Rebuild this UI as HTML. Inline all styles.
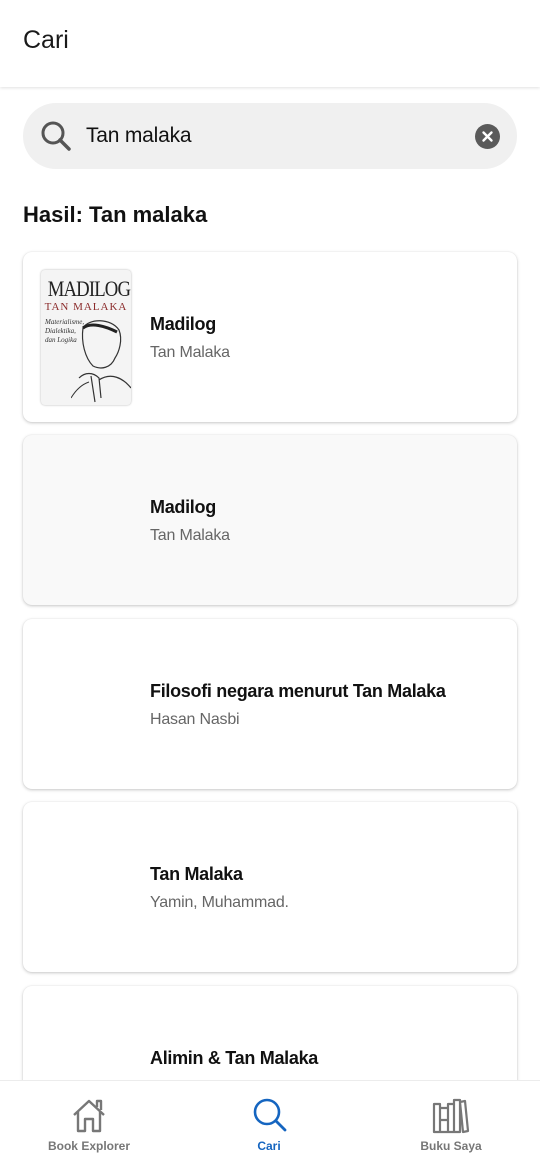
<!DOCTYPE html>
<html><head><meta charset="utf-8"><style>
*{margin:0;padding:0;box-sizing:border-box}
body{width:540px;height:1169px;overflow:hidden;background:#fff;font-family:"Liberation Sans",Roboto,sans-serif;position:relative;color:#111}
.hdr{position:absolute;top:0;left:0;width:540px;height:87px;background:#fff;box-shadow:0 1px 3px rgba(0,0,0,.12)}
.hdr h1{position:absolute;left:23px;top:26px;font-size:25px;font-weight:400;color:#1a1a1a}
.search{position:absolute;left:23px;top:103px;width:494px;height:66px;border-radius:33px;background:#f0f0f0}
.search .t{position:absolute;left:63px;top:21px;font-size:21px;color:#111;letter-spacing:-.2px}
.clr{position:absolute;left:452px;top:21px;width:25px;height:25px;border-radius:50%;background:#5a5a5a}
.res{position:absolute;left:23px;top:202px;font-size:22px;font-weight:700}
.card{position:absolute;left:23px;width:494px;height:170px;background:#fff;border-radius:9px;box-shadow:0 1px 3px rgba(0,0,0,.22),0 0 1px rgba(0,0,0,.1)}
.card .ti{position:absolute;left:127px;top:62px;font-size:18px;font-weight:700;color:#111;letter-spacing:-.3px}
.card .au{position:absolute;left:127px;top:92px;font-size:16px;color:#666;letter-spacing:-.2px}
.cover{position:absolute;left:18px;top:18px;width:90px;height:135px;background:#f4f4f4;border-radius:4px;overflow:hidden;box-shadow:0 0 2px rgba(0,0,0,.3)}
.nav{position:absolute;left:0;top:1080px;width:540px;height:89px;background:#fff;border-top:1px solid #ececec}
.nav .lb{position:absolute;top:58px;font-size:12px;font-weight:700;color:#777;transform:translateX(-50%);white-space:nowrap}
</style></head><body>
<div class="hdr"><h1>Cari</h1></div>
<div class="search">
<svg style="position:absolute;left:16px;top:16px" width="34" height="34" viewBox="0 0 34 34"><circle cx="14" cy="14" r="10" fill="none" stroke="#555" stroke-width="3"/><line x1="21" y1="21" x2="30" y2="30" stroke="#555" stroke-width="3.5" stroke-linecap="round"/></svg>
<span class="t">Tan malaka</span>
<div class="clr"><svg width="25" height="25" viewBox="0 0 25 25"><path d="M8.5 8.5L16.5 16.5M16.5 8.5L8.5 16.5" stroke="#fff" stroke-width="2.4" stroke-linecap="round"/></svg></div>
</div>
<div class="res">Hasil: Tan malaka</div>

<div class="card" style="top:252px">
<div class="cover">
<div style="position:absolute;left:0;width:90px;top:6px;text-align:center;font-family:'Liberation Serif',serif;font-size:22px;color:#222;letter-spacing:-1px;transform:scaleX(.85)">MADILOG</div>
<div style="position:absolute;left:0;width:90px;top:31px;text-align:center;font-family:'Liberation Serif',serif;font-size:11px;color:#8b2b2b;letter-spacing:1px">TAN MALAKA</div>
<div style="position:absolute;left:4px;top:48px;font-family:'Liberation Serif',serif;font-style:italic;font-size:7px;color:#333;line-height:9px">Materialisme,<br>Dialektika,<br>dan Logika</div>
<svg style="position:absolute;left:30px;top:48px" width="60" height="87" viewBox="0 0 60 87"><path d="M12 10C18 0 40 0 48 12C52 22 48 34 44 40C40 50 30 52 22 48C14 40 10 24 12 10Z" fill="none" stroke="#333" stroke-width="1.2"/><path d="M12 10C20 4 34 8 46 14" fill="none" stroke="#222" stroke-width="3"/><path d="M8 60C14 54 22 54 28 60L30 80M20 58L24 84M28 62C40 54 52 60 60 70" fill="none" stroke="#333" stroke-width="1.2"/><path d="M0 80C6 70 12 66 18 64" fill="none" stroke="#333" stroke-width="1"/></svg>
</div>
<div class="ti">Madilog</div><div class="au">Tan Malaka</div></div>
<div class="card" style="top:435px;background:#f9f9f9"><div class="ti">Madilog</div><div class="au">Tan Malaka</div></div>
<div class="card" style="top:619px"><div class="ti">Filosofi negara menurut Tan Malaka</div><div class="au">Hasan Nasbi</div></div>
<div class="card" style="top:802px"><div class="ti">Tan Malaka</div><div class="au">Yamin, Muhammad.</div></div>
<div class="card" style="top:986px"><div class="ti">Alimin &amp; Tan Malaka</div></div>

<div class="nav">
<svg style="position:absolute;left:70px;top:16px" width="38" height="38" viewBox="0 0 38 38"><path d="M4 18L19 4L34 18M8 15V34H15V22H23V34H30V15M27 10V4H31V13" fill="none" stroke="#777" stroke-width="2.4" stroke-linejoin="round"/></svg>
<div class="lb" style="left:89px">Book Explorer</div>
<svg style="position:absolute;left:252px;top:16px" width="36" height="36" viewBox="0 0 36 36"><circle cx="15" cy="15" r="12" fill="none" stroke="#1565c0" stroke-width="2.6"/><line x1="24" y1="24" x2="33" y2="33" stroke="#1565c0" stroke-width="2.8" stroke-linecap="round"/></svg>
<div class="lb" style="left:269px;color:#1565c0">Cari</div>
<svg style="position:absolute;left:432px;top:17px" width="38" height="36" viewBox="0 0 38 36"><path d="M2 6H8V34H2ZM8 10H16V34H8ZM9 22H15M16 6H22V34H16ZM22 2H28V34H22ZM28 4L33 3L36 33L31 34Z" fill="none" stroke="#777" stroke-width="2.2" stroke-linejoin="round"/></svg>
<div class="lb" style="left:451px">Buku Saya</div>
</div>
</body></html>
